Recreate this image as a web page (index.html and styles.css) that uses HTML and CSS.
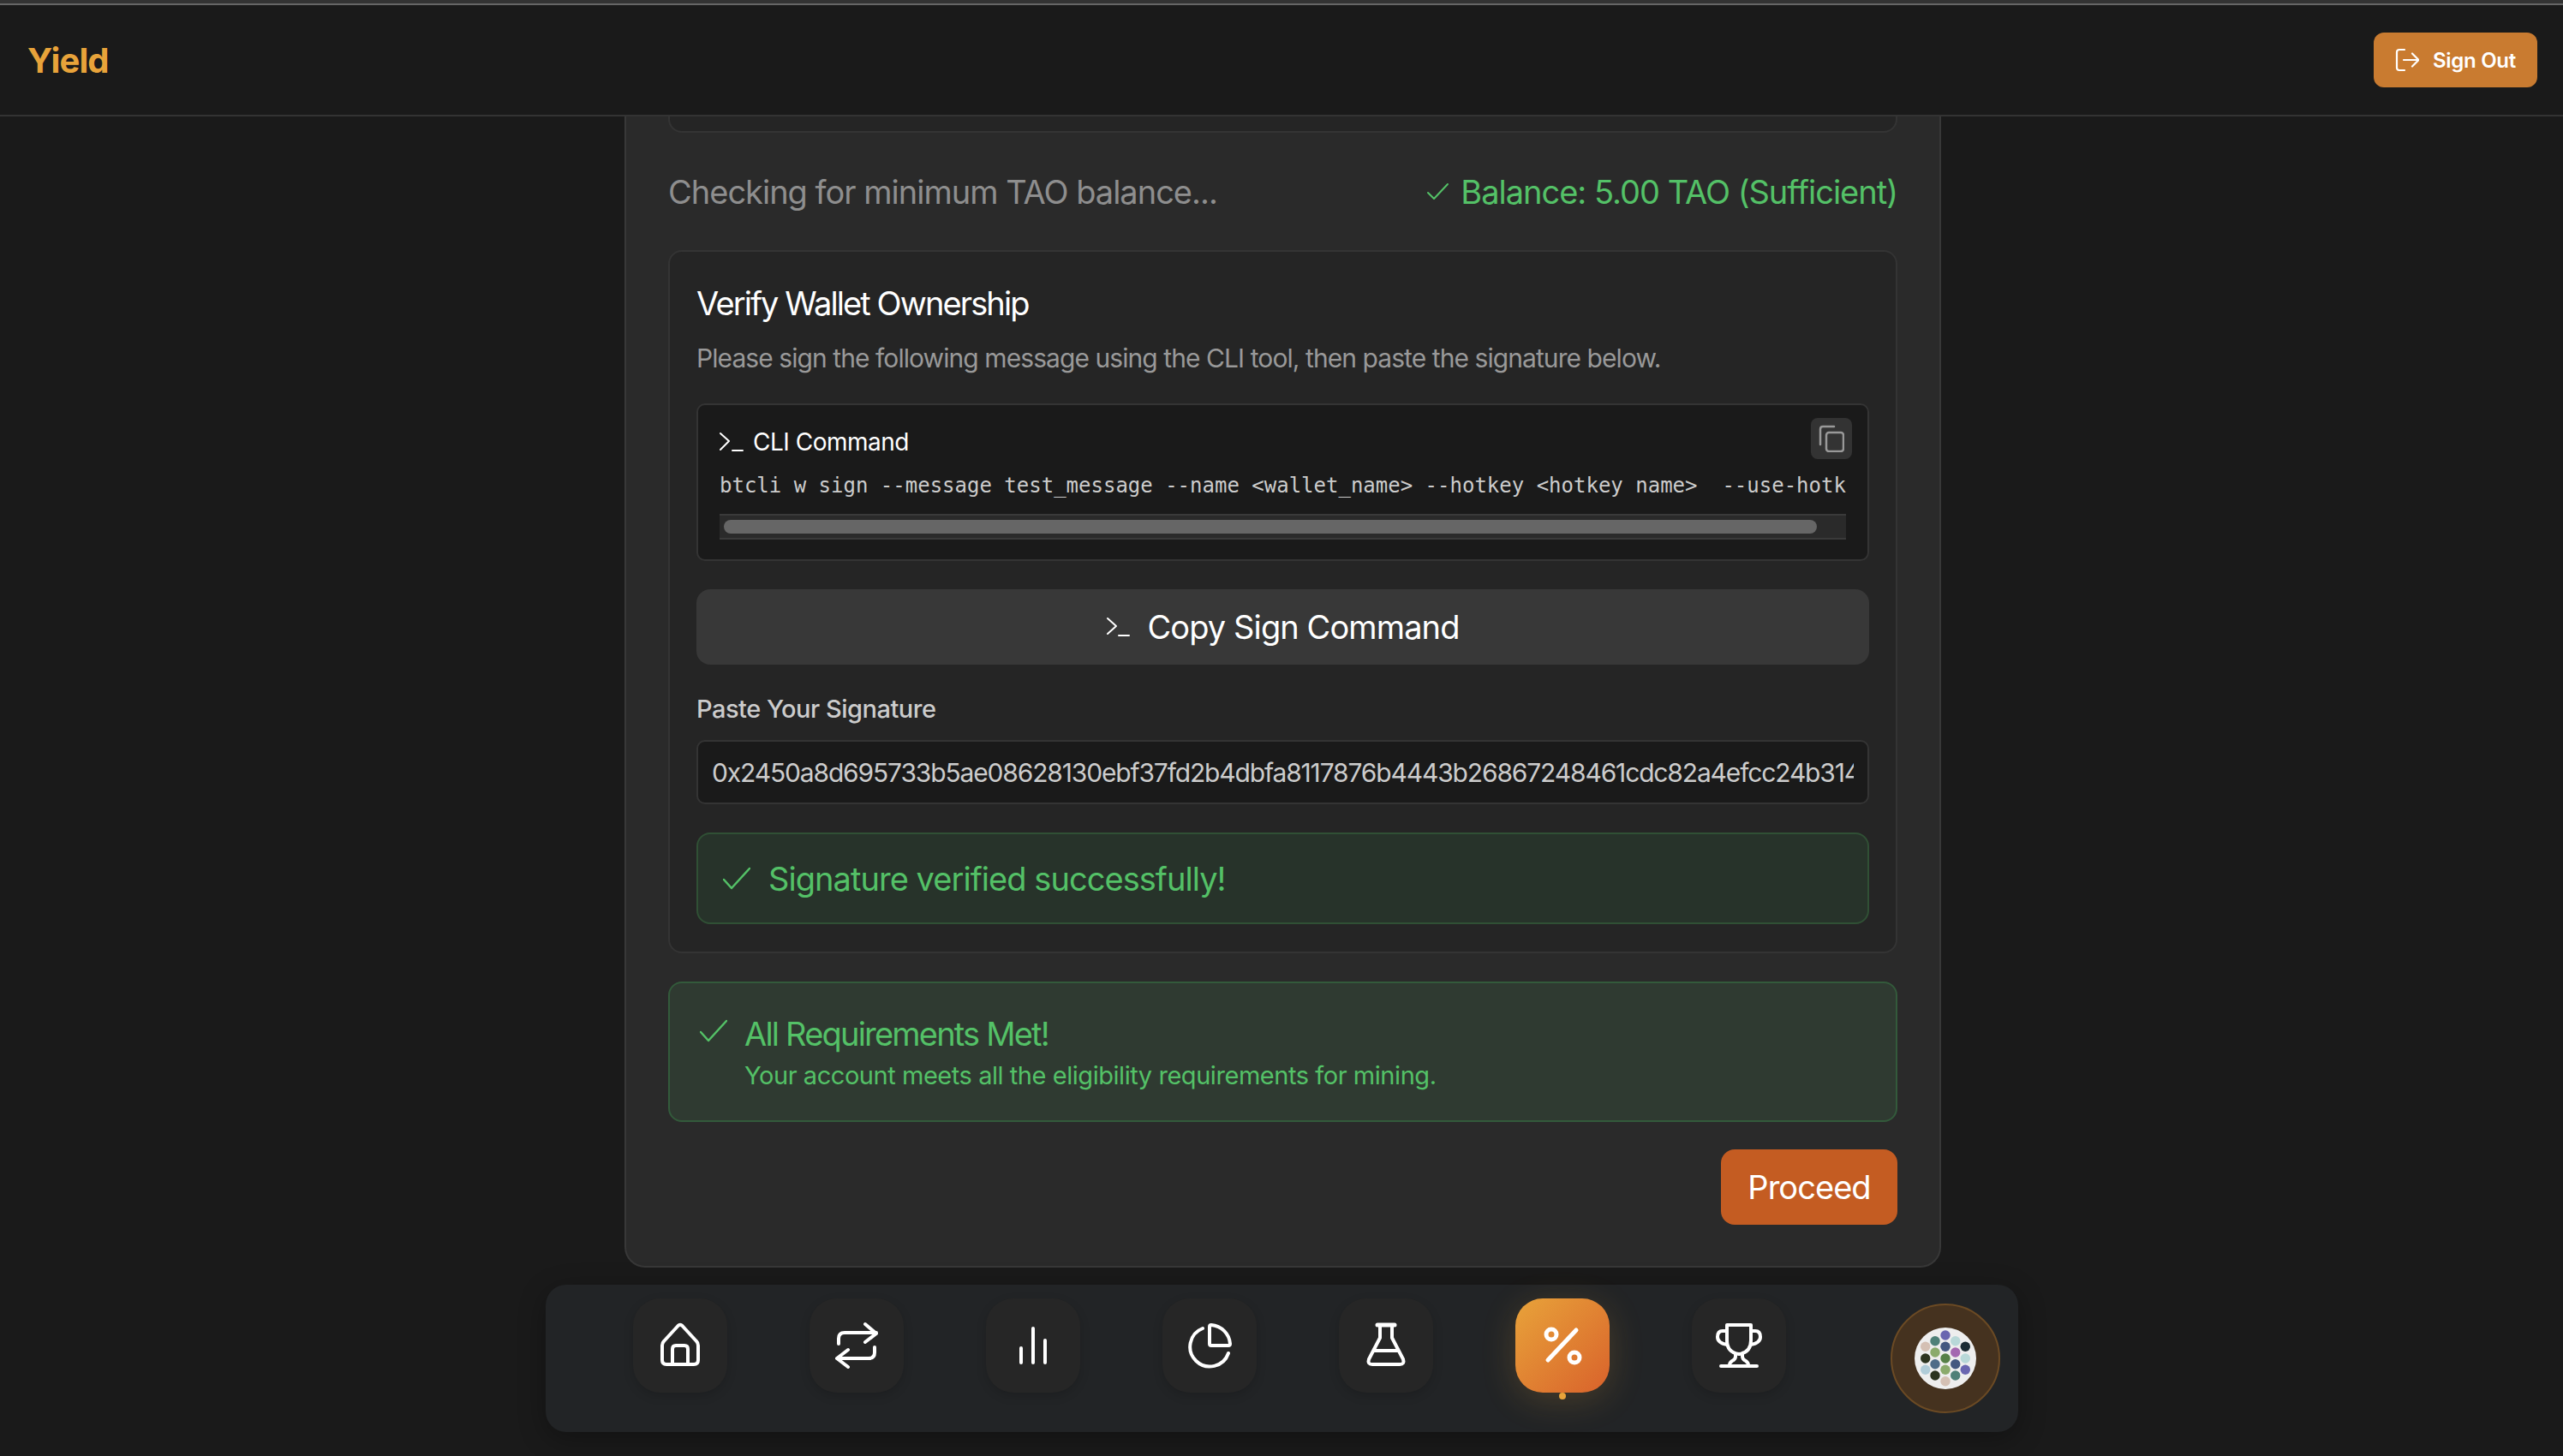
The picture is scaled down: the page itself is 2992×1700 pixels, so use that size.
FILE: index.html
```html
<!DOCTYPE html>
<html>
<head>
<title>Yield</title>
<link rel="stylesheet" href="styles.css">
</head>
<body>
<div class="topline"></div>
<header class="topbar">
  <div class="logo">Yield</div>
  <button class="signout">
    <svg class="icon" width="28" height="28" viewBox="0 0 28 28" stroke-width="2.2"><path d="M11 2H5Q2 2 2 5V23Q2 26 5 26H11"/><path d="M10 14H27M20 6.500L27.500 14L20 21.500"/></svg>
    Sign Out
  </button>
</header>
<main class="panel">
  <div class="card-end"></div>
  <div class="balance">
    <span class="balance-label">Checking for minimum TAO balance...</span>
    <span class="balance-ok">
      <svg class="icon" width="28" height="28" viewBox="0 0 28 28" stroke-width="2"><path d="M2 15L9 22L25 5"/></svg>
      Balance: 5.00 TAO (Sufficient)
    </span>
  </div>
  <section class="card">
    <h2 class="card-title">Verify Wallet Ownership</h2>
    <p class="card-desc">Please sign the following message using the CLI tool, then paste the signature below.</p>
    <div class="cli">
      <div class="cli-head">
        <div class="cli-title">
          <svg class="icon" width="28" height="28" viewBox="0 0 28 28" stroke-width="2"><path d="M1 4L11 13L1 23M15 24H27"/></svg>
          CLI Command
        </div>
        <button class="copy">
          <svg class="icon" width="30" height="32" viewBox="0 0 30 32" stroke-width="2.500"><rect x="9" y="9" width="20" height="22" rx="3"/><path d="M2 23V5Q2 2 5 2H18"/></svg>
        </button>
      </div>
      <div class="cli-code">btcli w sign --message test_message --name &lt;wallet_name&gt; --hotkey &lt;hotkey name&gt;  --use-hotk</div>
      <div class="scroll-track"><div class="scroll-thumb"></div></div>
    </div>
    <button class="copy-sign">
      <svg class="icon" width="28" height="28" viewBox="0 0 28 28" stroke-width="2"><path d="M2 4L12 13L2 22M15 24H27"/></svg>
      Copy Sign Command
    </button>
    <label class="sig-label">Paste Your Signature</label>
    <input class="sig-input" value="0x2450a8d695733b5ae08628130ebf37fd2b4dbfa8117876b4443b26867248461cdc82a4efcc24b314">
    <div class="alert">
      <svg class="icon" width="32" height="32" viewBox="0 0 32 32" stroke-width="2.500"><path d="M1 17L10 27L31 4"/></svg>
      Signature verified successfully!
    </div>
  </section>
  <section class="alert-big">
    <svg class="icon" width="32" height="32" viewBox="0 0 32 32" stroke-width="2.500"><path d="M1 17L10 27L31 4"/></svg>
    <div>
      <div class="alert-title">All Requirements Met!</div>
      <div class="alert-sub">Your account meets all the eligibility requirements for mining.</div>
    </div>
  </section>
  <div class="actions">
    <button class="proceed">Proceed</button>
  </div>
</main>
<nav class="dock">
  <a class="dock-item">
    <svg class="icon" width="56" height="56" viewBox="0 0 56 56" stroke-width="4"><path d="M25.500 5L9 23Q7 25 7 28V45Q7 50 12 50H44Q49 50 49 45V28Q49 25 47 23L30.500 5Q28 2.500 25.500 5Z"/><path d="M19 50V32Q19 28 23 28H33Q37 28 37 32V50"/></svg>
  </a>
  <a class="dock-item">
    <svg class="icon" width="56" height="56" viewBox="0 0 56 56" stroke-width="4"><path d="M7 26V20Q7 13 14 13H51M38 3L51 14L38 24"/><path d="M49 30V36Q49 43 42 43H5M18 33L5 43L18 53"/></svg>
  </a>
  <a class="dock-item">
    <svg class="icon" width="56" height="56" viewBox="0 0 56 56" stroke-width="4"><path d="M14 31V48M28 8V48M42 22V48"/></svg>
  </a>
  <a class="dock-item">
    <svg class="icon" width="56" height="56" viewBox="0 0 56 56" stroke-width="4"><path d="M30 4A24 24 0 0 1 52 26Q52 28 50 28H30Q28 28 28 26V6Q28 4 30 4Z"/><path d="M20 8A23 23 0 1 0 50 37"/></svg>
  </a>
  <a class="dock-item">
    <svg class="icon" width="56" height="56" viewBox="0 0 56 56" stroke-width="4"><path d="M18 4H38" stroke-width="5"/><path d="M21 5V19L8 44Q6 50 12 50H44Q50 50 48 44L35 19V5"/><path d="M14 34H42"/></svg>
  </a>
  <a class="dock-item dock-active">
    <svg class="icon" width="56" height="56" viewBox="0 0 56 56" stroke-width="5"><path d="M44 10L11 45"/><circle cx="15" cy="15" r="6"/><circle cx="42" cy="42" r="6"/></svg>
  </a>
  <a class="dock-item">
    <svg class="icon" width="56" height="56" viewBox="0 0 56 56" stroke-width="4"><path d="M14 4H42V22Q42 36 28 38Q14 36 14 22Z"/><path d="M14 11H9Q3 11 3 18Q3 25 14 27M42 11H47Q53 11 53 18Q53 25 42 27"/><path d="M24 38V41Q24 44 20 46Q17 48 17 51M32 38V41Q32 44 36 46Q39 48 39 51"/><path d="M7 52H49"/></svg>
  </a>
  <div class="avatar">
    <svg class="avatar-art" width="72" height="72" viewBox="0 0 72 72">
      <circle cx="36" cy="36" r="36" fill="#eeeeee"/>
      <circle cx="36" cy="9" r="5.700" fill="#6a66b0"/>
      <circle cx="24" cy="15.700" r="5.700" fill="#4f8078"/>
      <circle cx="47.700" cy="15.700" r="5.700" fill="#b8d8d8"/>
      <circle cx="12.700" cy="22.300" r="5.700" fill="#d4c0b4"/>
      <circle cx="36" cy="22.300" r="5.700" fill="#445880"/>
      <circle cx="59.300" cy="22.300" r="5.700" fill="#1c2c34"/>
      <circle cx="24" cy="29" r="5.700" fill="#8aaa6c"/>
      <circle cx="47.700" cy="29" r="5.700" fill="#a468b0"/>
      <circle cx="12.700" cy="36" r="5.700" fill="#2c3420"/>
      <circle cx="36" cy="36" r="5.700" fill="#568048"/>
      <circle cx="59.300" cy="36" r="5.700" fill="#b8d8d8"/>
      <circle cx="24" cy="42.700" r="5.700" fill="#4f6c88"/>
      <circle cx="47.700" cy="42.700" r="5.700" fill="#445880"/>
      <circle cx="12.700" cy="49.300" r="5.700" fill="#b0ccd8"/>
      <circle cx="36" cy="49.300" r="5.700" fill="#8aaa6c"/>
      <circle cx="59.300" cy="49.300" r="5.700" fill="#6a66b0"/>
      <circle cx="24" cy="56" r="5.700" fill="#2c3420"/>
      <circle cx="47.700" cy="56" r="5.700" fill="#4f8078"/>
      <circle cx="36" cy="62.700" r="5.700" fill="#d4c0b4"/>
    </svg>
  </div>
</nav>
</body>
</html>
```

FILE: styles.css
```css
body {
  margin: 0;
  height: 1700px;
  overflow: hidden;
  background: #1a1a1a;
  color: #ffffff;
  font-family: Inter, "Liberation Sans", sans-serif;
  display: flex;
  flex-direction: column;
}

button {
  font-family: inherit;
  border: none;
  color: #ffffff;
}

.icon {
  fill: none;
  stroke: currentColor;
  stroke-linecap: round;
  stroke-linejoin: round;
  flex: none;
}

.topline {
  height: 4px;
  background: #333333;
  border-bottom: 2px solid #666666;
}

.topbar {
  height: 128px;
  border-bottom: 2px solid #333333;
  padding: 0 30px 0 32px;
  display: flex;
  align-items: center;
  justify-content: space-between;
}

.logo {
  font-size: 40px;
  font-weight: 700;
  letter-spacing: -0.9px;
  color: #e8a33a;
}

.signout {
  width: 191px;
  height: 64px;
  border-radius: 12px;
  background: #c97b30;
  font-size: 24px;
  font-weight: 600;
  letter-spacing: -0.3px;
  display: flex;
  align-items: center;
  justify-content: center;
  gap: 16px;
}

.panel {
  width: 1537px;
  box-sizing: border-box;
  margin: 0 0 0 729px;
  padding: 0 49px 48px;
  background: #2a2a2a;
  border: 2px solid #383838;
  border-top: none;
  border-radius: 0 0 24px 24px;
}

.card-end {
  height: 17px;
  background: #252525;
  border: 2px solid #343434;
  border-top: none;
  border-radius: 0 0 16px 16px;
}

.balance {
  height: 44px;
  margin: 47px 0 46px;
  font-size: 38px;
  line-height: 44px;
  letter-spacing: -1px;
  display: flex;
  justify-content: space-between;
}

.balance-label {
  color: #8e8e8e;
}

.balance-ok {
  color: #54c167;
  display: flex;
  align-items: center;
  gap: 12px;
}

.card {
  background: #252525;
  border: 2px solid #343434;
  border-radius: 16px;
  padding: 34px 31px 32px;
}

.card-title {
  margin: 0;
  font-size: 38px;
  line-height: 52px;
  font-weight: 400;
  letter-spacing: -1.9px;
}

.card-desc {
  margin: 16px 0 31px;
  font-size: 30px;
  line-height: 44px;
  letter-spacing: -0.93px;
  color: #999999;
}

.cli {
  background: #1a1a1a;
  border: 2px solid #343434;
  border-radius: 10px;
  padding: 15px 25px 23px;
}

.cli-head {
  height: 48px;
  display: flex;
  justify-content: space-between;
}

.cli-title {
  display: flex;
  align-items: center;
  gap: 11px;
  font-size: 28px;
  font-weight: 400;
  letter-spacing: -0.5px;
  margin-top: 8px;
}

.copy {
  width: 48px;
  height: 48px;
  padding: 0;
  margin-right: -7px;
  border-radius: 8px;
  background: #333333;
  color: #999999;
  display: flex;
  align-items: center;
  justify-content: center;
}

.cli-code {
  margin-top: 16px;
  height: 30px;
  font-family: "DejaVu Sans Mono", monospace;
  font-size: 24px;
  line-height: 30px;
  color: #cccccc;
  white-space: pre;
  overflow: hidden;
}

.scroll-track {
  margin-top: 18px;
  height: 26px;
  background: #2a2a2a;
  border-top: 2px solid #3a3a3a;
  border-bottom: 2px solid #3a3a3a;
  display: flex;
  align-items: center;
}

.scroll-thumb {
  width: 1276px;
  height: 16px;
  margin-left: 5px;
  border-radius: 8px;
  background: #666666;
}

.copy-sign {
  display: flex;
  align-items: center;
  justify-content: center;
  gap: 20px;
  width: 100%;
  height: 88px;
  margin-top: 33px;
  border-radius: 16px;
  background: #383838;
  font-size: 38px;
  font-weight: 400;
  letter-spacing: -0.9px;
}

.sig-label {
  display: block;
  margin: 34px 0 18px;
  font-size: 29px;
  line-height: 36px;
  font-weight: 500;
  letter-spacing: -0.5px;
  color: #cccccc;
}

.sig-input {
  display: block;
  width: 100%;
  height: 75px;
  box-sizing: border-box;
  padding: 0 16px;
  background: #1a1a1a;
  border: 2px solid #343434;
  border-radius: 10px;
  font-family: inherit;
  font-size: 30px;
  letter-spacing: -1.15px;
  color: #cccccc;
}

.alert {
  height: 107px;
  box-sizing: border-box;
  margin-top: 33px;
  padding-left: 29px;
  background: #27332a;
  border: 2px solid #305035;
  border-radius: 16px;
  color: #54c167;
  font-size: 38px;
  letter-spacing: -0.95px;
  display: flex;
  align-items: center;
  gap: 21px;
}

.alert-big {
  margin-top: 33px;
  padding: 35px 35px 32px;
  background: #2f3a31;
  border: 2px solid #335a3b;
  border-radius: 16px;
  color: #54c167;
  display: flex;
  align-items: flex-start;
  gap: 20px;
}

.alert-big .icon {
  margin-top: 5px;
}

.alert-title {
  font-size: 38px;
  line-height: 48px;
  letter-spacing: -1.8px;
}

.alert-sub {
  margin-top: 5px;
  font-size: 29px;
  line-height: 40px;
  letter-spacing: -0.45px;
}

.actions {
  display: flex;
  justify-content: flex-end;
  margin-top: 32px;
}

.proceed {
  width: 206px;
  height: 88px;
  border-radius: 16px;
  background: #c45c22;
  font-size: 38px;
  font-weight: 400;
  letter-spacing: -0.95px;
}

.dock {
  width: 1719px;
  height: 172px;
  box-sizing: border-box;
  margin: 20px 0 0 637px;
  padding: 16px 0 0 102px;
  background: #222426;
  border-radius: 24px;
  box-shadow: 0 8px 32px rgba(0, 0, 0, 0.3);
  display: flex;
  align-items: flex-start;
  gap: 96px;
}

.dock-item {
  position: relative;
  width: 110px;
  height: 110px;
  border-radius: 32px;
  background: #262626;
  box-shadow: 0 4px 12px rgba(0, 0, 0, 0.15);
  display: flex;
  align-items: center;
  justify-content: center;
}

.dock-active {
  background: linear-gradient(135deg, #e8a33a, #d9622b);
  box-shadow: 0 8px 40px rgba(232, 163, 58, 0.2);
}

.dock-active::after {
  content: "";
  position: absolute;
  left: 51px;
  top: 110px;
  width: 8px;
  height: 8px;
  border-radius: 50%;
  background: #e8a33a;
}

.avatar {
  width: 128px;
  height: 128px;
  box-sizing: border-box;
  margin: 6px 0 0 26px;
  border: 2px solid #6b4a24;
  border-radius: 50%;
  background: #45321f;
  display: flex;
  align-items: center;
  justify-content: center;
}
```
